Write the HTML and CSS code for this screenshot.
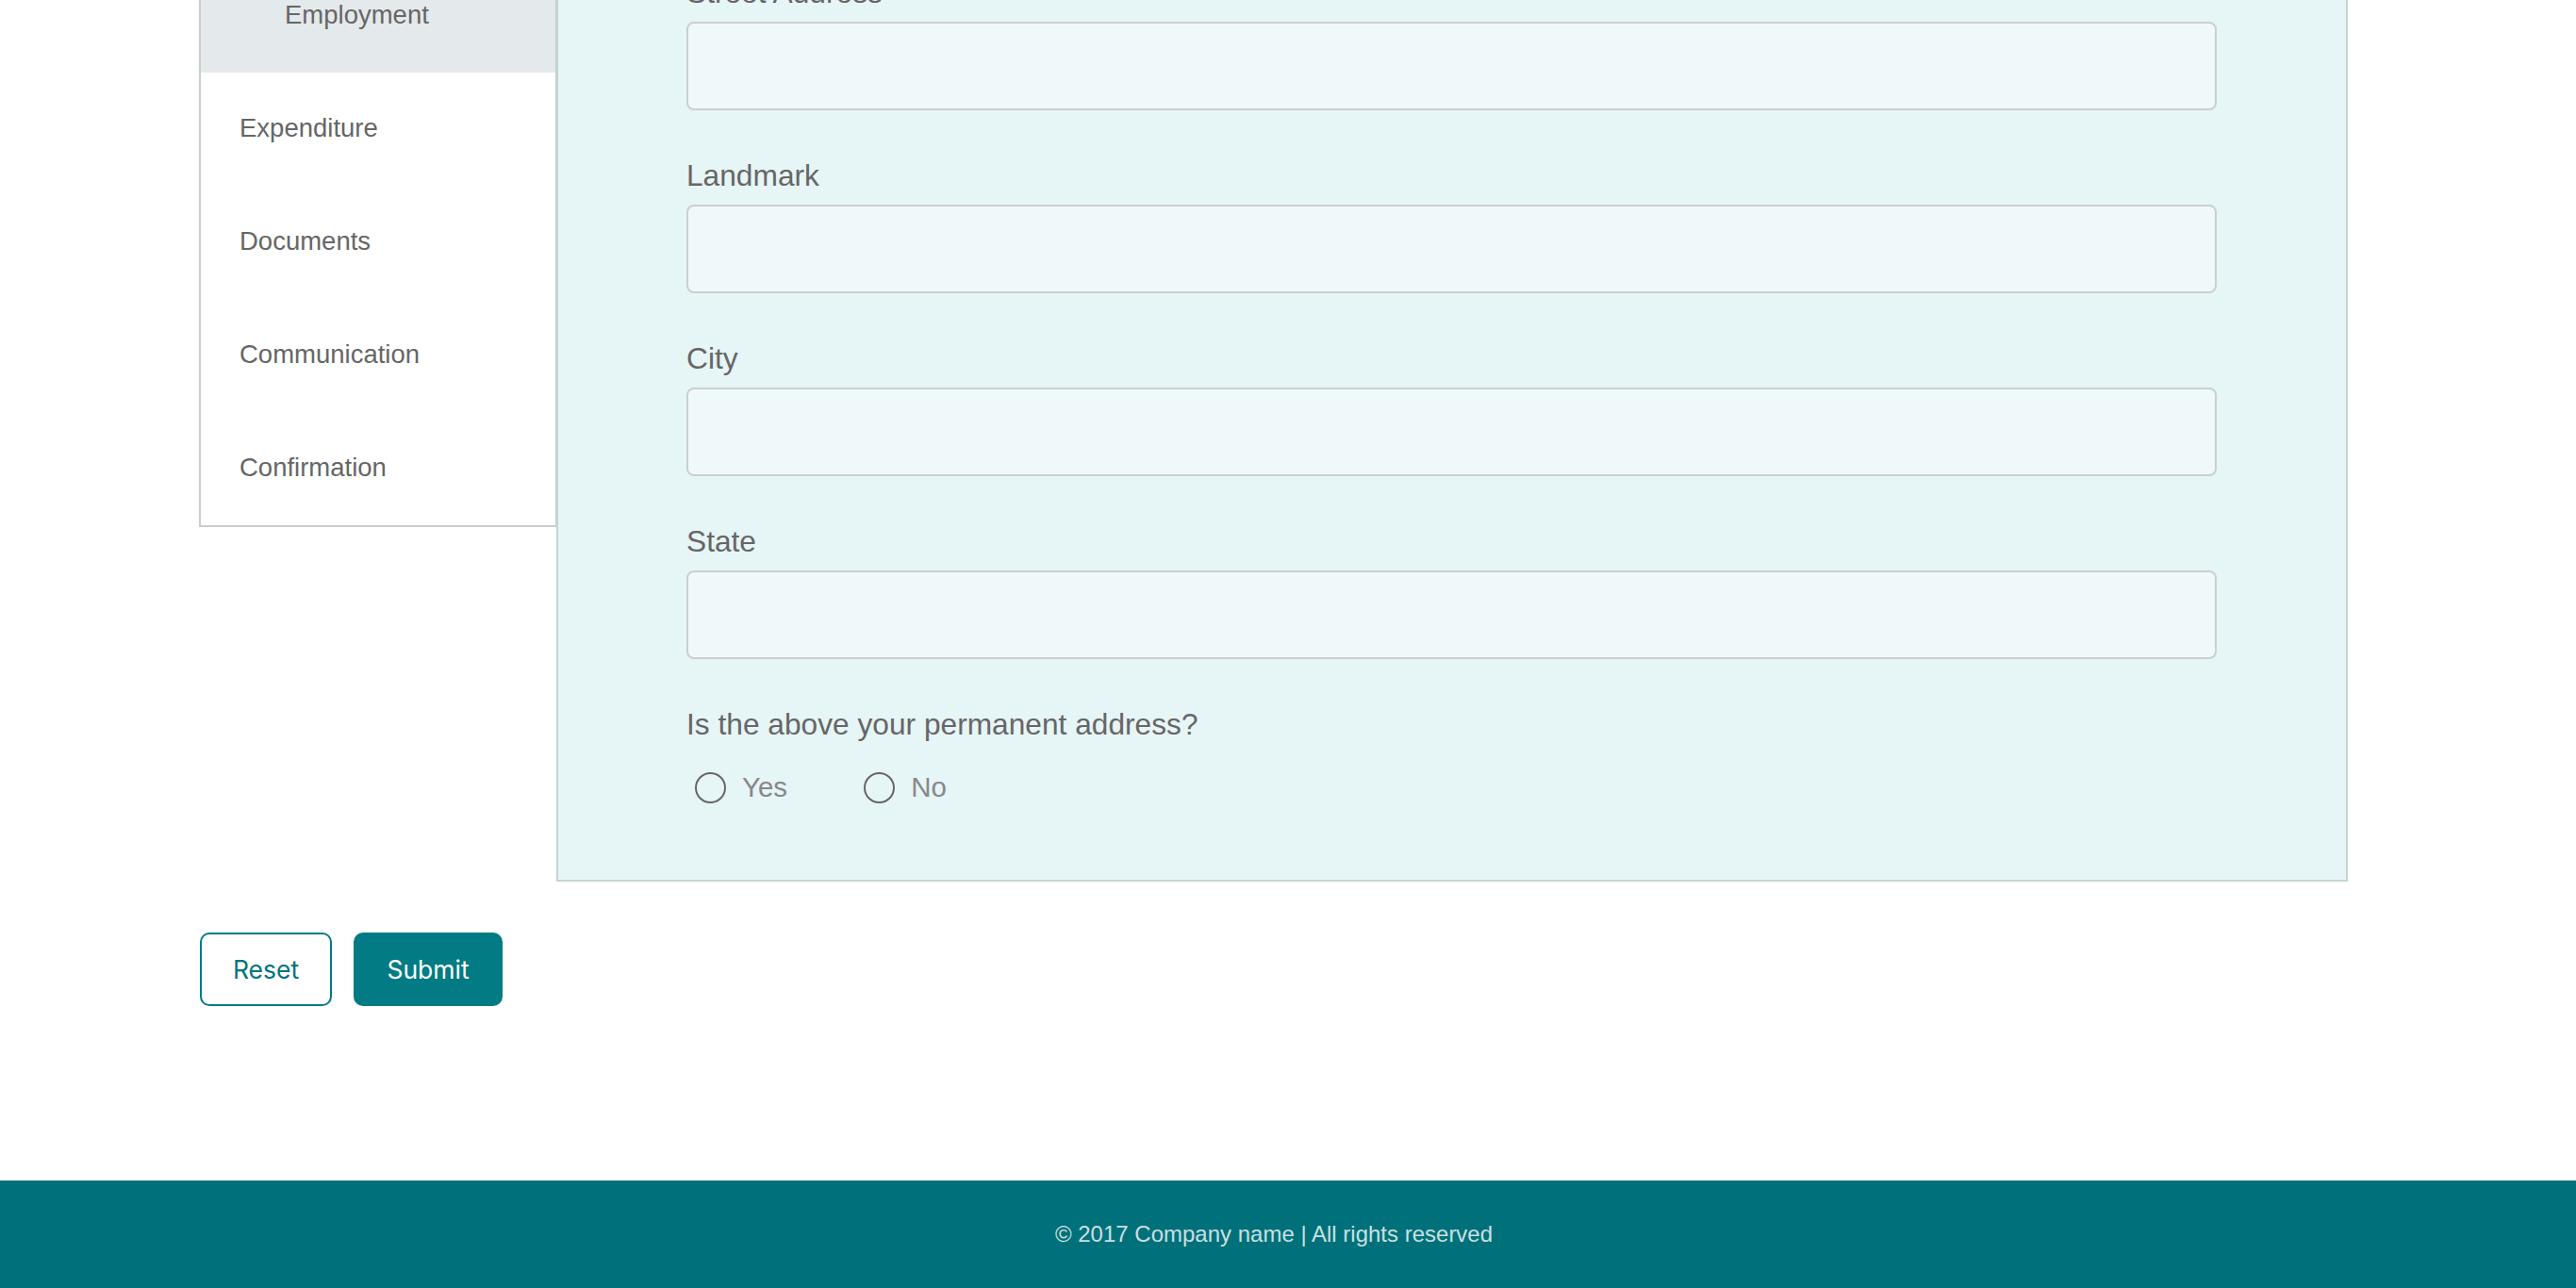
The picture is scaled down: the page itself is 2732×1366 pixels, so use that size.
FILE: index.html
```html
<!DOCTYPE html>
<html lang="en">
<head>
<meta charset="utf-8">
<title>Application form</title>
<link rel="stylesheet" href="styles.css">
</head>
<body>
<div class="page">
  <main class="wrap">
    <div class="layout">
      <nav class="sidebar">
        <a class="nav-item">Personal</a>
        <a class="nav-item">Address</a>
        <a class="nav-item nav-item--active nav-item--sub">Employment</a>
        <a class="nav-item">Expenditure</a>
        <a class="nav-item">Documents</a>
        <a class="nav-item">Communication</a>
        <a class="nav-item">Confirmation</a>
      </nav>
      <form class="panel">
        <div class="field">
          <label class="field-label">House Number</label>
          <input class="field-input" type="text">
        </div>
        <div class="field">
          <label class="field-label">Street Address</label>
          <input class="field-input" type="text">
        </div>
        <div class="field">
          <label class="field-label">Landmark</label>
          <input class="field-input" type="text">
        </div>
        <div class="field">
          <label class="field-label">City</label>
          <input class="field-input" type="text">
        </div>
        <div class="field">
          <label class="field-label">State</label>
          <input class="field-input" type="text">
        </div>
        <div class="question">
          <p class="field-label">Is the above your permanent address?</p>
          <div class="radio-row">
            <label class="radio"><input class="radio-input" type="radio" name="perm"><span>Yes</span></label>
            <label class="radio"><input class="radio-input" type="radio" name="perm"><span>No</span></label>
          </div>
        </div>
      </form>
    </div>
    <div class="actions">
      <button class="btn btn--outline" type="button">Reset</button>
      <button class="btn btn--primary" type="button">Submit</button>
    </div>
  </main>
  <footer class="footer">
    <p class="footer-text">© 2017 Company name | All rights reserved</p>
  </footer>
</div>
</body>
</html>
```
FILE: styles.css
```css
* { box-sizing: border-box; }

html, body {
  margin: 0;
  padding: 0;
  background: #ffffff;
}

body {
  font-family: "Liberation Sans", Arial, Helvetica, sans-serif;
  color: #666666;
  overflow: hidden;
}

.page {
  width: 100%;
}

.wrap {
  width: 2280px;
  margin: -285px 0 0 211px;
}

.layout {
  display: flex;
  align-items: flex-start;
}

.sidebar {
  width: 380px;
  flex: 0 0 380px;
  display: flex;
  flex-direction: column;
  border: 2px solid #cccccc;
  background: #ffffff;
}

.nav-item {
  display: block;
  height: 120px;
  padding: 43px 20px 45px 41px;
  font-size: 27.5px;
  line-height: 32px;
  color: #666666;
  white-space: nowrap;
}

.nav-item--sub {
  padding-left: 89px;
}

.nav-item--active {
  background: #e4e9eb;
}

.panel {
  width: 1900px;
  flex: 0 0 1900px;
  margin: 0 0 0 -1px;
  background: #e6f5f6;
  border: 2px solid #c4d3d4;
  padding: 61px 137px 78px 136px;
  display: flex;
  flex-direction: column;
  gap: 49px;
}

.field {
  display: flex;
  flex-direction: column;
  gap: 11px;
}

.field-label {
  display: block;
  margin: 0;
  font-size: 31.7px;
  line-height: 40px;
  color: #666666;
}

.field-input {
  display: block;
  width: 100%;
  height: 94px;
  margin: 0;
  background: #f0f9fa;
  border: 2px solid #cbcfd0;
  border-radius: 8px;
  font-family: inherit;
  font-size: 28px;
  padding: 0 20px;
  outline: none;
}

.question {
  display: flex;
  flex-direction: column;
  gap: 27px;
}

.radio-row {
  display: flex;
  align-items: center;
  height: 40px;
  padding-left: 9px;
  gap: 81px;
}

.radio {
  display: flex;
  align-items: center;
  gap: 17px;
  font-size: 29.5px;
  line-height: 40px;
  color: #888888;
}

.radio-input {
  -webkit-appearance: none;
  appearance: none;
  width: 33px;
  height: 33px;
  margin: 0;
  border: 2px solid #666666;
  border-radius: 50%;
  background: transparent;
}

.actions {
  display: flex;
  gap: 23px;
  margin: 54px 0 0 1px;
}

.btn {
  height: 78px;
  border-radius: 10px;
  font-family: Inter, "Noto Sans", sans-serif;
  font-size: 26.5px;
  cursor: pointer;
  padding: 0;
}

.btn--outline {
  width: 140px;
  background: #ffffff;
  border: 2px solid #007a84;
  color: #00747e;
}

.btn--primary {
  width: 158px;
  background: #027b84;
  border: 2px solid #027b84;
  color: #ffffff;
}

.footer {
  margin-top: 185px;
  height: 114px;
  background: #00717a;
  display: flex;
  align-items: center;
  padding-right: 30px;
}

.footer-text {
  margin: 0;
  width: 100%;
  text-align: center;
  font-size: 24px;
  line-height: 30px;
  color: rgba(255, 255, 255, 0.8);
}
```
